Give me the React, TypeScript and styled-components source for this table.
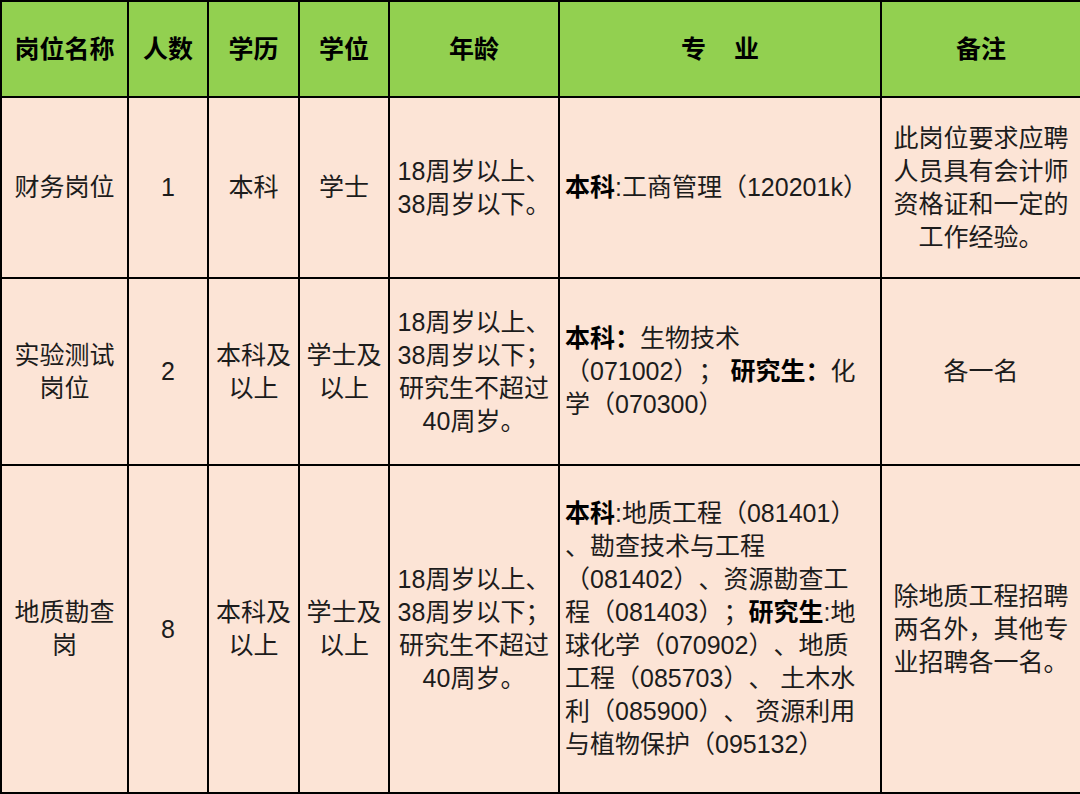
import React from "react";
import styled, { createGlobalStyle } from "styled-components";

const GlobalStyle = createGlobalStyle`
  html, body {
    margin: 0;
    padding: 0;
    background: #ffffff;
  }
  body {
    font-family: "Liberation Sans", "Noto Sans CJK SC", sans-serif;
  }
`;

const Table = styled.table`
  width: 1080px;
  border-collapse: collapse;
  table-layout: fixed;
  font-size: 25px;
  line-height: 33px;
  color: #1c1c1c;
  text-spacing-trim: space-all;
`;

const HeadCell = styled.th`
  background: #92d050;
  border: 2px solid #000;
  font-weight: bold;
  color: #000;
  text-align: center;
  vertical-align: middle;
  padding: 0;
  white-space: pre;
`;

const Cell = styled.td<{ $left?: boolean }>`
  background: #fce4d6;
  border: 2px solid #000;
  text-align: ${({ $left }) => ($left ? "left" : "center")};
  vertical-align: middle;
  padding: ${({ $left }) => ($left ? "0 0 0 5px" : "0")};
  white-space: nowrap;
`;

const Row = styled.tr<{ $h: number }>`
  height: ${({ $h }) => $h}px;
`;

const Line = styled.div``;

const B = styled.b`
  font-weight: bold;
  color: #000;
`;

const cols = [127, 80, 91, 90, 170, 322, 200];
const headers = ["岗位名称", "人数", "学历", "学位", "年龄", "专    业", "备注"];

const Lines: React.FC<{ lines: React.ReactNode[] }> = ({ lines }) => (
  <>
    {lines.map((l, i) => (
      <Line key={i}>{l}</Line>
    ))}
  </>
);

export default function App() {
  return (
    <>
      <GlobalStyle />
      <Table>
        <colgroup>
          {cols.map((w, i) => (
            <col key={i} style={{ width: w }} />
          ))}
        </colgroup>
        <thead>
          <Row $h={96}>
            {headers.map((h) => (
              <HeadCell key={h}>{h}</HeadCell>
            ))}
          </Row>
        </thead>
        <tbody>
          <Row $h={181}>
            <Cell>财务岗位</Cell>
            <Cell>1</Cell>
            <Cell>本科</Cell>
            <Cell>学士</Cell>
            <Cell>
              <Lines lines={["18周岁以上、", "38周岁以下。"]} />
            </Cell>
            <Cell $left>
              <B>本科</B>:工商管理（120201k）
            </Cell>
            <Cell>
              <Lines lines={["此岗位要求应聘", "人员具有会计师", "资格证和一定的", "工作经验。"]} />
            </Cell>
          </Row>
          <Row $h={187}>
            <Cell>
              <Lines lines={["实验测试", "岗位"]} />
            </Cell>
            <Cell>2</Cell>
            <Cell>
              <Lines lines={["本科及", "以上"]} />
            </Cell>
            <Cell>
              <Lines lines={["学士及", "以上"]} />
            </Cell>
            <Cell>
              <Lines lines={["18周岁以上、", "38周岁以下；", "研究生不超过", "40周岁。"]} />
            </Cell>
            <Cell $left>
              <Lines
                lines={[
                  <>
                    <B>本科：</B>生物技术
                  </>,
                  <>
                    （071002）； <B>研究生：</B>化
                  </>,
                  "学（070300）",
                ]}
              />
            </Cell>
            <Cell>各一名</Cell>
          </Row>
          <Row $h={328}>
            <Cell>
              <Lines lines={["地质勘查", "岗"]} />
            </Cell>
            <Cell>8</Cell>
            <Cell>
              <Lines lines={["本科及", "以上"]} />
            </Cell>
            <Cell>
              <Lines lines={["学士及", "以上"]} />
            </Cell>
            <Cell>
              <Lines lines={["18周岁以上、", "38周岁以下；", "研究生不超过", "40周岁。"]} />
            </Cell>
            <Cell $left>
              <Lines
                lines={[
                  <>
                    <B>本科</B>:地质工程（081401）
                  </>,
                  "、勘查技术与工程",
                  "（081402）、资源勘查工",
                  <>
                    程（081403）；<B>研究生</B>:地
                  </>,
                  "球化学（070902）、地质",
                  "工程（085703）、 土木水",
                  "利（085900）、 资源利用",
                  "与植物保护（095132）",
                ]}
              />
            </Cell>
            <Cell>
              <Lines lines={["除地质工程招聘", "两名外，其他专", "业招聘各一名。"]} />
            </Cell>
          </Row>
        </tbody>
      </Table>
    </>
  );
}
